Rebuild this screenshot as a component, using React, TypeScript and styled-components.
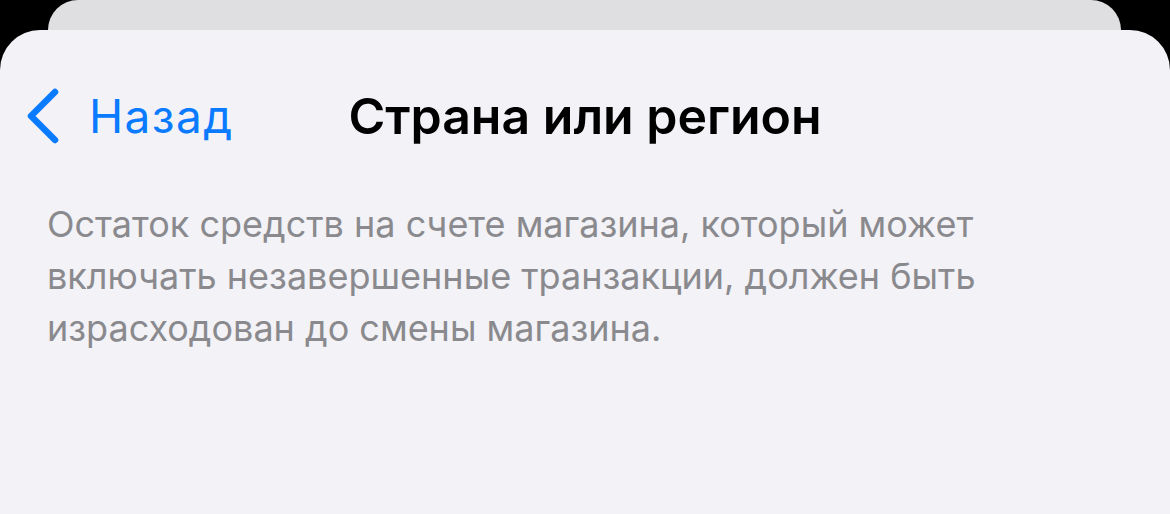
import styled, { createGlobalStyle } from "styled-components";

const GlobalStyle = createGlobalStyle`
  html, body {
    margin: 0;
    padding: 0;
    background: #000;
  }
  body {
    font-family: Inter, "Noto Sans", "Liberation Sans", sans-serif;
    -webkit-font-smoothing: antialiased;
  }
`;

const Screen = styled.div`
  width: 1170px;
  height: 514px;
  overflow: hidden;
  background: #000;
  display: flex;
  flex-direction: column;
`;

const BackCard = styled.div`
  height: 30px;
  margin: 0 49px 0 48px;
  background: #dfdfe1;
  border-radius: 30px 30px 0 0;
  flex-shrink: 0;
`;

const Sheet = styled.div`
  flex: 1;
  background: #f2f2f7;
  border-radius: 40px 40px 0 0;
  display: flex;
  flex-direction: column;
`;

const NavBar = styled.div`
  height: 68px;
  padding-top: 52px;
  display: grid;
  grid-template-columns: 1fr auto 1fr;
  align-items: center;
`;

const BackButton = styled.button`
  justify-self: start;
  display: flex;
  align-items: center;
  gap: 28px;
  border: 0;
  padding: 0 0 0 27px;
  background: none;
  color: #0a7aff;
  font: inherit;
  font-size: 46px;
  letter-spacing: 1.4px;
  cursor: pointer;
`;

const Title = styled.h1`
  margin: 0;
  font-size: 50px;
  font-weight: 600;
  color: #000;
  letter-spacing: 0px;
`;

const Note = styled.p`
  margin: 48px 0 0 47px;
  width: 1000px;
  font-size: 36px;
  line-height: 52px;
  color: #8a8a8e;
  letter-spacing: 0;
`;

function Chevron() {
  return (
    <svg width="34" height="56" viewBox="0 0 34 56">
      <polyline
        points="28,4 4,28 28,52"
        fill="none"
        stroke="#0a7aff"
        strokeWidth="6.5"
        strokeLinecap="round"
        strokeLinejoin="round"
      />
    </svg>
  );
}

export default function App() {
  return (
    <>
      <GlobalStyle />
      <Screen>
        <BackCard />
        <Sheet>
          <NavBar>
            <BackButton>
              <Chevron />
              Назад
            </BackButton>
            <Title>Страна или регион</Title>
            <span />
          </NavBar>
          <Note>
            Остаток средств на счете магазина, который может
            <br />
            включать незавершенные транзакции, должен быть
            <br />
            израсходован до смены магазина.
          </Note>
        </Sheet>
      </Screen>
    </>
  );
}
